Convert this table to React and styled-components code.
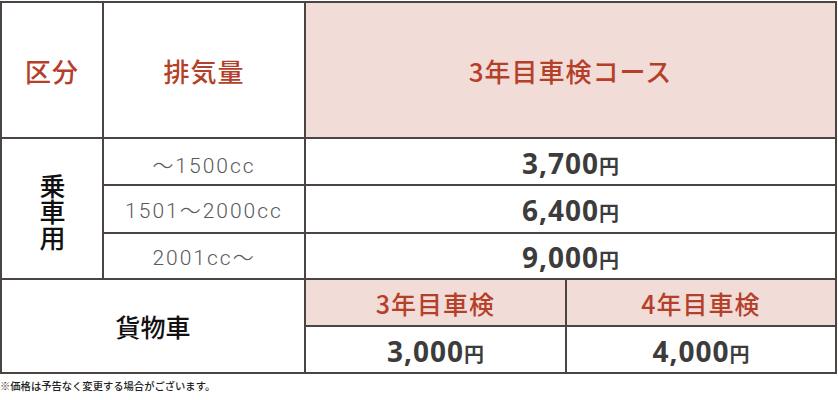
import React from 'react';
import styled, { createGlobalStyle } from 'styled-components';

const GlobalStyle = createGlobalStyle`
  body {
    margin: 0;
    background: #fff;
    font-family: "Noto Sans CJK JP", "Noto Sans", sans-serif;
  }
`;

const Page = styled.div`
  padding-top: 1px;
  width: 838px;
`;

// the gap + grid background draws every rule of the table
const PriceGrid = styled.div`
  display: grid;
  grid-template-columns: 100px 200px 259px 268px;
  grid-template-rows: 134px 45px 46px 44px 45px 45px;
  gap: 2px;
  padding: 2px;
  width: 837px;
  box-sizing: border-box;
  background: #4a4443;
`;

const Cell = styled.div`
  display: flex;
  align-items: center;
  justify-content: center;
  background: ${p => p.pink ? '#f2dcd8' : '#fff'};
  grid-column: ${p => p.col};
  grid-row: ${p => p.row};
`;

const HeadText = styled.span`
  color: #b5402a;
  font-size: ${p => p.size || 26}px;
  font-weight: 500;
  letter-spacing: 1px;
`;

const CategoryText = styled.span`
  color: #111;
  font-size: ${p => p.vertical ? 26 : 25}px;
  font-weight: 500;
  line-height: 26px;
  writing-mode: ${p => p.vertical ? 'vertical-rl' : 'horizontal-tb'};
  margin-top: ${p => p.vertical ? '6px' : '0'};
`;

const RangeText = styled.span`
  color: #5a5a5a;
  font-family: Roboto, "Noto Sans CJK JP", sans-serif;
  font-weight: 300;
  font-size: 21px;
  letter-spacing: 2px;
  margin-top: ${p => p.drop || 0}px;
`;

const Price = styled.span`
  color: #3c3c3c;
  font-family: "Open Sans", "Noto Sans CJK JP", sans-serif;
  font-weight: 700;
  font-size: 28px;
  letter-spacing: 1px;
  margin-top: 2px;
`;

const Yen = styled.span`
  font-family: "Noto Sans CJK JP", sans-serif;
  font-size: 20px;
  letter-spacing: 0;
`;

const Note = styled.p`
  margin: 5px 0 0;
  font-size: 10.3px;
  font-weight: 500;
  line-height: 14px;
  color: #222;
`;

const passengerRows = [
  { range: '～1500cc', price: '3,700', drop: 4 },
  { range: '1501～2000cc', price: '6,400', drop: 0 },
  { range: '2001cc～', price: '9,000', drop: 0 },
];

const Amount = ({ value }) => (
  <Price>{value}<Yen>円</Yen></Price>
);

const App = () => (
  <Page>
    <GlobalStyle />
    <PriceGrid>
      <Cell col="1" row="1"><HeadText>区分</HeadText></Cell>
      <Cell col="2" row="1"><HeadText>排気量</HeadText></Cell>
      <Cell col="3 / 5" row="1" pink><HeadText>3年目車検コース</HeadText></Cell>

      <Cell col="1" row="2 / 5">
        <CategoryText vertical>乗車用</CategoryText>
      </Cell>
      {passengerRows.map((r, i) => (
        <React.Fragment key={r.range}>
          <Cell col="2" row={i + 2}><RangeText drop={r.drop}>{r.range}</RangeText></Cell>
          <Cell col="3 / 5" row={i + 2}><Amount value={r.price} /></Cell>
        </React.Fragment>
      ))}

      <Cell col="1 / 3" row="5 / 7"><CategoryText>貨物車</CategoryText></Cell>
      <Cell col="3" row="5" pink><HeadText size={25}>3年目車検</HeadText></Cell>
      <Cell col="4" row="5" pink><HeadText size={25}>4年目車検</HeadText></Cell>
      <Cell col="3" row="6"><Amount value="3,000" /></Cell>
      <Cell col="4" row="6"><Amount value="4,000" /></Cell>
    </PriceGrid>
    <Note>※価格は予告なく変更する場合がございます。</Note>
  </Page>
);

export default App;
